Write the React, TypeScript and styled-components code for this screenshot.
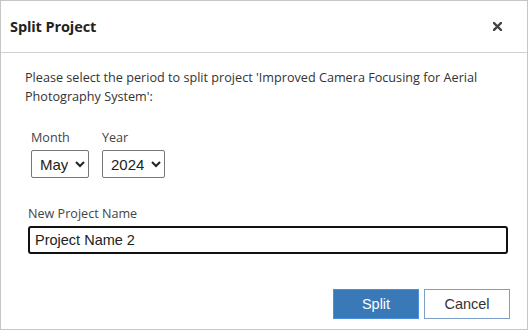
import React from 'react';
import styled, { createGlobalStyle } from 'styled-components';

const Global = createGlobalStyle`
  html, body {
    margin: 0;
    padding: 0;
    background: #ffffff;
  }
  * { box-sizing: border-box; }
`;

const Dialog = styled.div`
  width: 528px;
  height: 330px;
  border: 1px solid #c6c6c6;
  background: #ffffff;
  display: flex;
  flex-direction: column;
  font-family: "Open Sans", "Liberation Sans", sans-serif;
  color: #333333;
`;

const Header = styled.header`
  height: 52px;
  flex: none;
  border-bottom: 1px solid #cfcfcf;
  display: flex;
  align-items: center;
  justify-content: space-between;
  padding: 0 25px 0 9px;
  >h1{
    margin: 0;
    font-size: 14.5px;
    font-weight: 700;
    color: #222222;
    letter-spacing: -0.1px;
  }
`;

const CloseButton = styled.button`
  background: none;
  border: none;
  padding: 0;
  width: 10px;
  height: 10px;
  display: flex;
  align-items: center;
  justify-content: center;
  cursor: pointer;
`;

const Body = styled.main`
  flex: 1;
  padding: 15px 20px 0 24px;
  >p{
    margin: 0;
    font-size: 12.65px;
    line-height: 19px;
    color: #333333;
  }
`;

const PeriodRow = styled.div`
  display: flex;
  gap: 13px;
  margin: 23px 0 0 6px;
`;

const Field = styled.label`
  display: flex;
  flex-direction: column;
  gap: 4px;
  >span{
    font-size: 12.6px;
    line-height: 17px;
    color: #444444;
  }
`;

const Select = styled.select<{ $width: number }>`
  width: ${p => p.$width}px;
  height: 28px;
  font-family: "Liberation Sans", Arial, sans-serif;
  font-size: 15px;
  color: #222222;
  border: 1px solid #767676;
  border-radius: 2px;
  background: #ffffff;
  padding: 0 4px;
`;

const NameField = styled(Field)`
  margin: 27px 0 0 3px;
  gap: 4px;
`;

const TextInput = styled.input`
  width: 480px;
  height: 28px;
  border: 2px solid #111111;
  border-radius: 3px;
  padding: 0 5px;
  font-family: "Liberation Sans", Arial, sans-serif;
  font-size: 14.5px;
  color: #222222;
  outline: none;
`;

const Footer = styled.footer`
  display: flex;
  justify-content: flex-end;
  gap: 5px;
  padding: 0 17px 10px 0;
`;

const Button = styled.button<{ $primary?: boolean }>`
  width: 86px;
  height: 30px;
  font-family: "Liberation Sans", Arial, sans-serif;
  font-size: 14.5px;
  border-radius: 0;
  cursor: pointer;
  background: ${p => (p.$primary ? '#3a79b8' : '#ffffff')};
  color: ${p => (p.$primary ? '#ffffff' : '#333333')};
  border: 1px solid ${p => (p.$primary ? '#4a8fe0' : '#7b9fca')};
`;

export default function App() {
  return (
    <>
      <Global />
      <Dialog>
        <Header>
          <h1>Split Project</h1>
          <CloseButton aria-label="Close">
            <svg width="9" height="9" viewBox="0 0 9 9">
              <path d="M1 1 L8 8 M8 1 L1 8" stroke="#444" strokeWidth="2.4" strokeLinecap="square" />
            </svg>
          </CloseButton>
        </Header>
        <Body>
          <p>Please select the period to split project 'Improved Camera Focusing for Aerial Photography System':</p>
          <PeriodRow>
            <Field>
              <span>Month</span>
              <Select $width={58} defaultValue="May">
                <option>Jan</option>
                <option>Feb</option>
                <option>Mar</option>
                <option>Apr</option>
                <option>May</option>
                <option>Jun</option>
                <option>Jul</option>
                <option>Aug</option>
                <option>Sep</option>
                <option>Oct</option>
                <option>Nov</option>
                <option>Dec</option>
              </Select>
            </Field>
            <Field>
              <span>Year</span>
              <Select $width={63} defaultValue="2024">
                <option>2023</option>
                <option>2024</option>
                <option>2025</option>
              </Select>
            </Field>
          </PeriodRow>
          <NameField>
            <span>New Project Name</span>
            <TextInput defaultValue="Project Name 2" />
          </NameField>
        </Body>
        <Footer>
          <Button $primary>Split</Button>
          <Button>Cancel</Button>
        </Footer>
      </Dialog>
    </>
  );
}
